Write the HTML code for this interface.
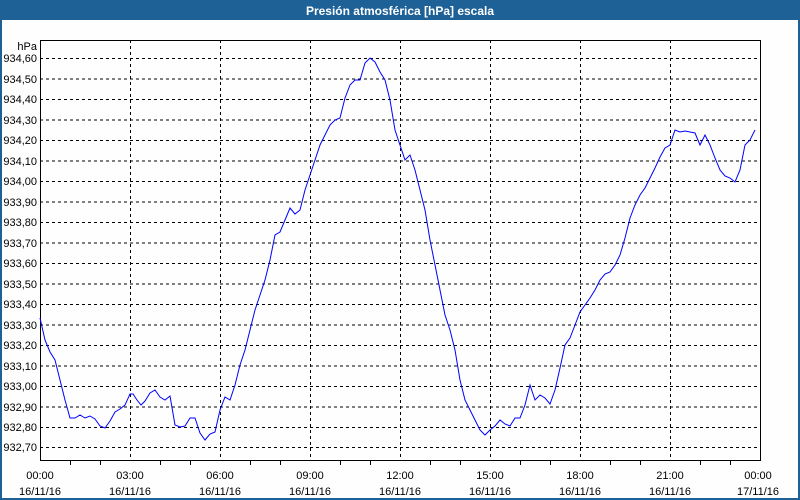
<!DOCTYPE html>
<html><head><meta charset="utf-8"><style>
html,body{margin:0;padding:0;width:800px;height:500px;overflow:hidden;background:#fff;}
svg{display:block;font-family:"Liberation Sans",sans-serif;}
</style></head><body>
<svg width="800" height="500" xmlns="http://www.w3.org/2000/svg">
<rect x="0" y="0" width="800" height="500" fill="#1d6196"/>
<rect x="2" y="20" width="796" height="478" fill="#fdfefd"/>
<text x="400" y="15" fill="#fff" font-size="12" font-weight="bold" text-anchor="middle">Presión atmosférica [hPa] escala</text>
<g stroke="#000" stroke-width="1" stroke-dasharray="3,3" shape-rendering="crispEdges">
<line x1="40" x2="760" y1="58.5" y2="58.5"/><line x1="40" x2="760" y1="79" y2="79"/><line x1="40" x2="760" y1="99.5" y2="99.5"/><line x1="40" x2="760" y1="120" y2="120"/><line x1="40" x2="760" y1="140.5" y2="140.5"/><line x1="40" x2="760" y1="161" y2="161"/><line x1="40" x2="760" y1="181.5" y2="181.5"/><line x1="40" x2="760" y1="202" y2="202"/><line x1="40" x2="760" y1="222.5" y2="222.5"/><line x1="40" x2="760" y1="243" y2="243"/><line x1="40" x2="760" y1="263.5" y2="263.5"/><line x1="40" x2="760" y1="284" y2="284"/><line x1="40" x2="760" y1="304.5" y2="304.5"/><line x1="40" x2="760" y1="325" y2="325"/><line x1="40" x2="760" y1="345.5" y2="345.5"/><line x1="40" x2="760" y1="366" y2="366"/><line x1="40" x2="760" y1="386.5" y2="386.5"/><line x1="40" x2="760" y1="407" y2="407"/><line x1="40" x2="760" y1="427.5" y2="427.5"/><line x1="40" x2="760" y1="447.5" y2="447.5"/>
<line x1="130.5" x2="130.5" y1="40" y2="460"/><line x1="220.5" x2="220.5" y1="40" y2="460"/><line x1="310.5" x2="310.5" y1="40" y2="460"/><line x1="400.5" x2="400.5" y1="40" y2="460"/><line x1="490.5" x2="490.5" y1="40" y2="460"/><line x1="580.5" x2="580.5" y1="40" y2="460"/><line x1="670.5" x2="670.5" y1="40" y2="460"/>
</g>
<rect x="40.5" y="40.5" width="720" height="420" fill="none" stroke="#000" shape-rendering="crispEdges"/>
<g stroke="#000" shape-rendering="crispEdges">
<line x1="70.5" x2="70.5" y1="460" y2="465"/><line x1="100.5" x2="100.5" y1="460" y2="465"/><line x1="160.5" x2="160.5" y1="460" y2="465"/><line x1="190.5" x2="190.5" y1="460" y2="465"/><line x1="250.5" x2="250.5" y1="460" y2="465"/><line x1="280.5" x2="280.5" y1="460" y2="465"/><line x1="340.5" x2="340.5" y1="460" y2="465"/><line x1="370.5" x2="370.5" y1="460" y2="465"/><line x1="430.5" x2="430.5" y1="460" y2="465"/><line x1="460.5" x2="460.5" y1="460" y2="465"/><line x1="520.5" x2="520.5" y1="460" y2="465"/><line x1="550.5" x2="550.5" y1="460" y2="465"/><line x1="610.5" x2="610.5" y1="460" y2="465"/><line x1="640.5" x2="640.5" y1="460" y2="465"/><line x1="700.5" x2="700.5" y1="460" y2="465"/><line x1="730.5" x2="730.5" y1="460" y2="465"/>
</g>
<g font-size="11" fill="#000" text-anchor="end">
<text x="37" y="50">hPa</text>
<text x="37" y="62">934,60</text><text x="37" y="83">934,50</text><text x="37" y="103">934,40</text><text x="37" y="124">934,30</text><text x="37" y="144">934,20</text><text x="37" y="165">934,10</text><text x="37" y="185">934,00</text><text x="37" y="206">933,90</text><text x="37" y="226">933,80</text><text x="37" y="247">933,70</text><text x="37" y="267">933,60</text><text x="37" y="288">933,50</text><text x="37" y="308">933,40</text><text x="37" y="329">933,30</text><text x="37" y="349">933,20</text><text x="37" y="370">933,10</text><text x="37" y="390">933,00</text><text x="37" y="411">932,90</text><text x="37" y="431">932,80</text><text x="37" y="451">932,70</text>
</g>
<g font-size="11" fill="#000" text-anchor="middle">
<text x="40" y="479">00:00</text><text x="40" y="495">16/11/16</text>
<text x="130" y="479">03:00</text><text x="130" y="495">16/11/16</text>
<text x="220" y="479">06:00</text><text x="220" y="495">16/11/16</text>
<text x="310" y="479">09:00</text><text x="310" y="495">16/11/16</text>
<text x="400" y="479">12:00</text><text x="400" y="495">16/11/16</text>
<text x="490" y="479">15:00</text><text x="490" y="495">16/11/16</text>
<text x="580" y="479">18:00</text><text x="580" y="495">16/11/16</text>
<text x="670" y="479">21:00</text><text x="670" y="495">16/11/16</text>
<text x="758" y="479">00:00</text><text x="758" y="495">17/11/16</text>
</g>
<polyline fill="none" stroke="#0000ff" stroke-width="1" points="40,318 45,340 50,352 55,360 60,380 65,400 70,418 75,418 80,415 85,418 90,416 95,419 100,426 105,428 110,421 115,412 120,409 125,405 130,394 133,394 137,400 141,405 145,401 150,393 155,390 160,397 165,400 170,396 175,425 180,427 185,426 190,418 195,418 200,433 205,440 210,434 215,432 220,410 225,397 230,400 235,385 240,365 245,350 250,330 255,310 260,295 265,280 270,260 275,235 280,232 285,220 290,208 295,214 300,210 305,190 310,175 315,160 320,145 325,135 330,125 335,120 340,118 345,98 350,85 355,80 360,80 365,63 370,58 375,62 380,72 385,80 390,100 395,130 400,145 405,160 410,155 415,170 420,190 425,210 430,240 435,265 440,290 445,315 450,330 455,350 460,380 465,400 470,410 475,420 480,430 485,435 490,430 495,426 500,420 505,424 510,426 515,418 520,418 525,405 530,385 535,400 540,395 545,398 550,404 555,390 560,368 565,345 570,338 575,325 580,312 585,305 590,298 595,290 600,280 605,274 610,272 615,265 620,255 625,238 630,218 635,205 640,195 645,188 650,178 655,168 660,157 665,148 670,145 675,130 680,132 685,131 690,132 695,133 700,145 705,135 710,145 715,158 720,170 725,176 730,178 735,182 740,170 745,145 750,140 755,130"/>
</svg>
</body></html>
